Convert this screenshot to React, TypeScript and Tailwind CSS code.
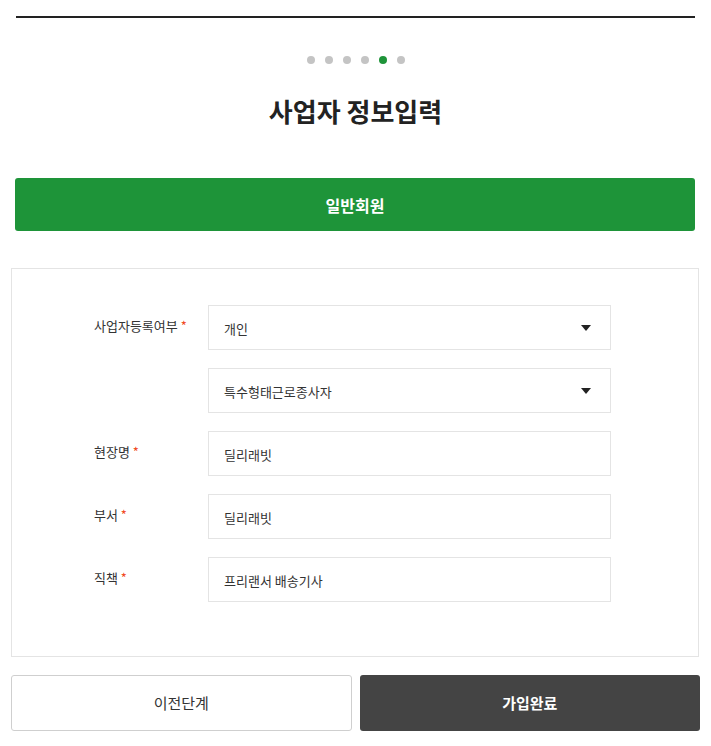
import React from "react";

const font = { fontFamily: '"Noto Sans CJK KR", "Noto Sans", sans-serif' };

function Caret() {
    return (
        <svg width="10" height="6" viewBox="0 0 10 6" className="shrink-0">
            <path d="M0 0 H10 L5 6 Z" fill="#222" />
        </svg>
    );
}

function Field({ label, value, select }: { label?: string; value: string; select?: boolean }) {
    return (
        <div className="flex items-start">
            <div className="w-[114px] shrink-0 pt-[12px] text-[13px] leading-[18px] text-[#333]">
                {label ? (
                    <>
                        {label} <span className="text-[#f04a24] text-[13px] align-top">*</span>
                    </>
                ) : null}
            </div>
            <div className="w-[403px] h-[45px] border border-[#e4e4e4] bg-white flex items-center justify-between pl-[15px] pr-[19px]">
                <span className="text-[13px] text-[#333] pt-[3px]">{value}</span>
                {select ? <Caret /> : null}
            </div>
        </div>
    );
}

export default function App() {
    return (
        <div className="w-[711px] min-h-[746px] bg-white" style={font}>
            {/* Top rule */}
            <div className="pt-[16px] pl-[16px] pr-[16px]">
                <div className="h-[2px] bg-[#222]" />
            </div>

            {/* Step dots */}
            <div className="flex justify-center gap-[10px] mt-[37px] h-[9px] items-center">
                {[0, 1, 2, 3, 4, 5].map(i => (
                    <div key={i} className={i === 4 ? "w-[8px] h-[8px] rounded-full bg-[#1e9439]" : "w-[8px] h-[8px] rounded-full bg-[#c4c4c4]"} />
                ))}
            </div>

            <h1 className="text-center text-[26px] font-bold text-[#222] leading-[36px] mt-[29px]">사업자 정보입력</h1>

            {/* Member type */}
            <div className="pl-[15px] pr-[16px] mt-[49px]">
                <div className="h-[53px] rounded-[3px] bg-[#1e9439] flex items-center justify-center text-white text-[16px] font-bold">
                    일반회원
                </div>
            </div>

            {/* Form */}
            <div className="ml-[11px] mr-[12px] mt-[37px] border border-[#e4e4e4] pt-[36px] pb-[54px] pl-[82px] flex flex-col gap-[18px]">
                <Field label="사업자등록여부" value="개인" select />
                <Field value="특수형태근로종사자" select />
                <Field label="현장명" value="딜리래빗" />
                <Field label="부서" value="딜리래빗" />
                <Field label="직책" value="프리랜서 배송기사" />
            </div>

            {/* Actions */}
            <div className="flex gap-[8px] ml-[11px] mr-[11px] mt-[18px]">
                <button className="w-[341px] h-[56px] rounded-[3px] border border-[#cfcfcf] bg-white text-[15px] text-[#333]">이전단계</button>
                <button className="w-[341px] h-[56px] rounded-[3px] bg-[#444] text-white text-[15px] font-bold">가입완료</button>
            </div>
        </div>
    );
}
